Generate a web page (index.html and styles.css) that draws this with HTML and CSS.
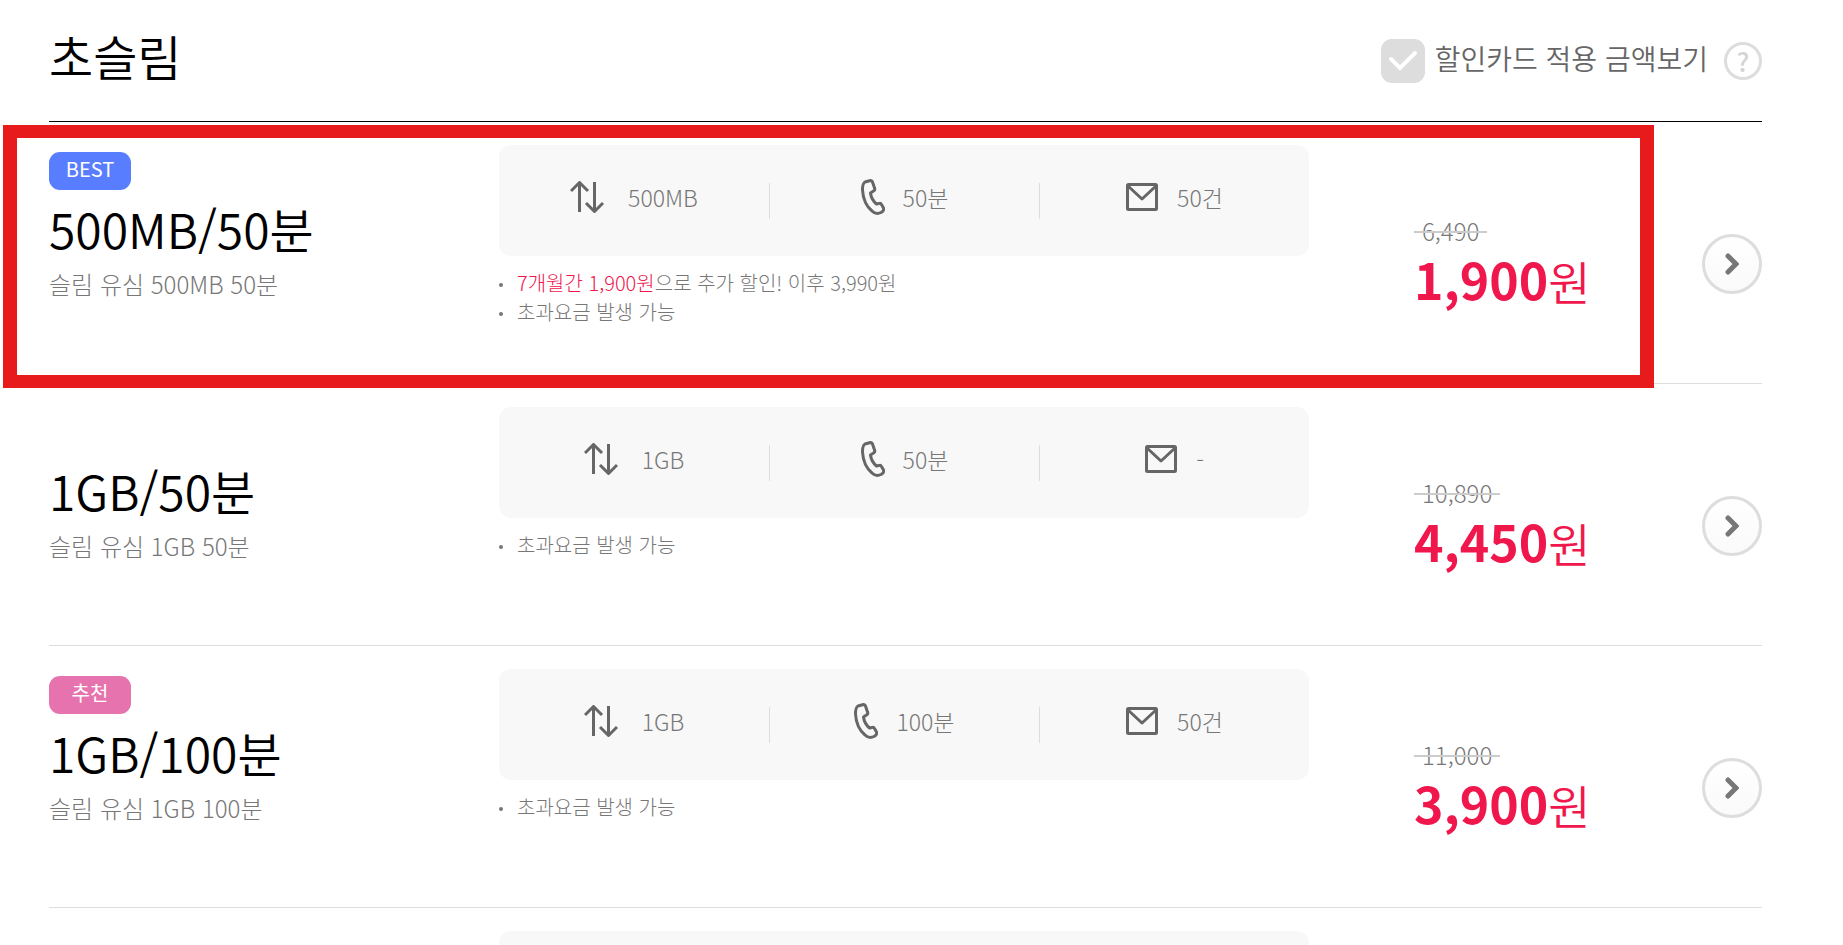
FILE: index.html
```html
<!DOCTYPE html>
<html lang="ko">
<head>
  <meta charset="UTF-8">
  <meta name="viewport" content="width=device-width, initial-scale=1.0">
  <title>초슬림 요금제</title>
  <link rel="stylesheet" href="styles.css">
</head>
<body>
  <!-- shared icons -->
  <svg class="sprite" aria-hidden="true">
    <symbol id="icon-data" viewBox="0 0 34 32">
      <path d="M9.500 31V2M1 10L9.500 1.500L18 10M24.500 1V30M16 22L24.500 30.500L33 22"/>
    </symbol>
    <symbol id="icon-call" viewBox="0 0 24 36">
      <path d="M9.500 1.500L4 3C2 4 1.500 7 1.500 11C2 19 5 27 11 32C13.500 34.500 17 35 20 33.500L21.500 32.500C22.500 31.500 23 30.500 22.500 29L20.500 25.500C20 24.500 19 24 18 24.500L15.500 25C12 22 10 18 9.500 14L12.500 12C14 11 14 10 13.500 9L11.500 3C11 2 10.500 1.500 9.500 1.500Z"/>
    </symbol>
    <symbol id="icon-mail" viewBox="0 0 32 28">
      <rect x="1.500" y="1.500" width="29" height="25" rx="1"/>
      <path d="M2 3L16 16L30 3"/>
    </symbol>
    <symbol id="icon-next" viewBox="0 0 14 22">
      <path d="M3 3L11 11L3 19"/>
    </symbol>
  </svg>

  <main class="page">
    <header class="page-header">
      <h1>초슬림</h1>
      <div class="discount">
        <label class="discount-label">
          <span class="check">
            <input type="checkbox">
            <svg viewBox="0 0 44 44"><path d="M10 20L19 29L34 14"/></svg>
          </span>
          <span class="discount-text">할인카드 적용 금액보기</span>
        </label>
        <button class="help" type="button" aria-label="도움말">?</button>
      </div>
    </header>

    <ul class="plans">
      <li class="plan highlight">
        <div class="plan-info">
          <div class="badge-slot"><span class="badge best">BEST</span></div>
          <h2>500MB/50분</h2>
          <p>슬림 유심 500MB 50분</p>
        </div>
        <div class="plan-detail">
          <div class="stats">
            <div class="stat"><svg class="icon data"><use href="#icon-data"/></svg><span>500MB</span></div>
            <div class="stat"><svg class="icon call"><use href="#icon-call"/></svg><span>50분</span></div>
            <div class="stat"><svg class="icon mail"><use href="#icon-mail"/></svg><span>50건</span></div>
          </div>
          <ul class="notes">
            <li><em>7개월간 1,900원</em>으로 추가 할인! 이후 3,990원</li>
            <li>초과요금 발생 가능</li>
          </ul>
        </div>
        <div class="plan-price">
          <div class="price">
            <del>6,490</del>
            <p><strong>1,900</strong>원</p>
          </div>
          <a class="next" href="#" aria-label="500MB/50분 상세보기"><svg><use href="#icon-next"/></svg></a>
        </div>
      </li>

      <li class="plan">
        <div class="plan-info">
          <div class="badge-slot"></div>
          <h2>1GB/50분</h2>
          <p>슬림 유심 1GB 50분</p>
        </div>
        <div class="plan-detail">
          <div class="stats">
            <div class="stat"><svg class="icon data"><use href="#icon-data"/></svg><span>1GB</span></div>
            <div class="stat"><svg class="icon call"><use href="#icon-call"/></svg><span>50분</span></div>
            <div class="stat"><svg class="icon mail"><use href="#icon-mail"/></svg><span>-</span></div>
          </div>
          <ul class="notes">
            <li>초과요금 발생 가능</li>
          </ul>
        </div>
        <div class="plan-price">
          <div class="price">
            <del>10,890</del>
            <p><strong>4,450</strong>원</p>
          </div>
          <a class="next" href="#" aria-label="1GB/50분 상세보기"><svg><use href="#icon-next"/></svg></a>
        </div>
      </li>

      <li class="plan">
        <div class="plan-info">
          <div class="badge-slot"><span class="badge pick">추천</span></div>
          <h2>1GB/100분</h2>
          <p>슬림 유심 1GB 100분</p>
        </div>
        <div class="plan-detail">
          <div class="stats">
            <div class="stat"><svg class="icon data"><use href="#icon-data"/></svg><span>1GB</span></div>
            <div class="stat"><svg class="icon call"><use href="#icon-call"/></svg><span>100분</span></div>
            <div class="stat"><svg class="icon mail"><use href="#icon-mail"/></svg><span>50건</span></div>
          </div>
          <ul class="notes">
            <li>초과요금 발생 가능</li>
          </ul>
        </div>
        <div class="plan-price">
          <div class="price">
            <del>11,000</del>
            <p><strong>3,900</strong>원</p>
          </div>
          <a class="next" href="#" aria-label="1GB/100분 상세보기"><svg><use href="#icon-next"/></svg></a>
        </div>
      </li>

      <li class="plan">
        <div class="plan-info"></div>
        <div class="plan-detail">
          <div class="stats"></div>
        </div>
      </li>
    </ul>
  </main>
</body>
</html>
```
FILE: styles.css
```css
:root {
  --text: #000;
  --muted: #777;
  --line: #ddd;
  --point: #f0174d;
  --frame: #e71b1b;
}
* {
  box-sizing: border-box;
  margin: 0;
  padding: 0;
}
body {
  height: 100vh;
  overflow: hidden;
  font-family: 'Noto Sans CJK KR', sans-serif;
  font-weight: 300;
  color: var(--text);
  background: #fff;
}
ul {
  list-style: none;
}
.sprite {
  display: none;
}
.page {
  padding: 0 81px 0 49px;
}

/* header */
.page-header {
  display: flex;
  justify-content: space-between;
  align-items: center;
  height: 122px;
  border-bottom: 1px solid #000;
}
.page-header h1 {
  font-size: 48px;
  font-weight: 350;
  line-height: 60px;
  padding-bottom: 12px;
}
.discount {
  display: flex;
  align-items: center;
  gap: 16px;
}
.discount-label {
  display: flex;
  align-items: center;
  gap: 10px;
  font-size: 28px;
  font-weight: 350;
  line-height: 44px;
  color: #666;
}
.discount-text {
  padding-bottom: 6px;
}
.check {
  position: relative;
  width: 44px;
  height: 44px;
}
.check input {
  appearance: none;
  display: block;
  width: 44px;
  height: 44px;
  border-radius: 11px;
  background: var(--line);
}
.check input:checked {
  background: var(--point);
}
.check svg {
  position: absolute;
  inset: 0;
  fill: none;
  stroke: #fff;
  stroke-width: 4;
  stroke-linecap: round;
  pointer-events: none;
}
.help {
  width: 38px;
  height: 38px;
  border: 3px solid var(--line);
  border-radius: 50%;
  background: #fff;
  color: #d4d4d4;
  font-family: inherit;
  font-size: 26px;
  font-weight: 500;
  line-height: 32px;
}

/* plan rows */
.plan {
  position: relative;
  display: grid;
  grid-template-columns: 150fr 270fr 151fr;
  min-height: 262px;
  padding-top: 23px;
  border-bottom: 1px solid var(--line);
}
.highlight::after {
  content: '';
  position: absolute;
  top: 3px;
  right: 108px;
  bottom: -5px;
  left: -46px;
  border: 13px solid var(--frame);
  border-width: 13px 14px;
  pointer-events: none;
}
.badge-slot {
  height: 45px;
  padding-top: 7px;
}
.badge {
  display: block;
  width: 82px;
  height: 38px;
  border-radius: 11px;
  color: #fff;
  font-size: 20px;
  font-weight: 400;
  line-height: 34px;
  text-align: center;
}
.best {
  background: #587dff;
}
.pick {
  background: #e673ad;
}
.plan-info h2 {
  font-size: 48px;
  font-weight: 350;
  line-height: 76px;
}
.plan-info p {
  font-size: 24px;
  line-height: 36px;
  color: var(--muted);
}

/* usage box */
.stats {
  display: grid;
  grid-template-columns: repeat(3, 1fr);
  align-items: center;
  height: 111px;
  border-radius: 12px;
  background: #f8f8f8;
}
.stat {
  display: flex;
  justify-content: center;
  align-items: center;
  height: 36px;
  padding-bottom: 8px;
  font-size: 23px;
  color: var(--muted);
}
.stat + .stat {
  border-left: 1px solid var(--line);
}
.icon {
  flex: none;
  fill: none;
  stroke: #666;
  stroke-width: 3;
  stroke-linejoin: round;
}
.data {
  width: 34px;
  height: 32px;
  margin-right: 24px;
}
.call {
  width: 24px;
  height: 36px;
  margin-right: 18px;
}
.mail {
  width: 32px;
  height: 28px;
  margin-right: 19px;
}
.notes {
  padding-top: 12px;
}
.notes li {
  display: flex;
  align-items: center;
  font-size: 20px;
  line-height: 29px;
  color: var(--muted);
}
.notes li::before {
  content: '';
  width: 4px;
  height: 4px;
  margin: 4px 14px 0 0;
  border-radius: 50%;
  background: var(--muted);
}
.notes em {
  font-style: normal;
  color: var(--point);
}

/* price */
.plan-price {
  display: flex;
  justify-content: space-between;
  align-items: center;
  height: 238px;
  padding-left: 105px;
}
.price {
  padding-bottom: 4px;
}
.price del {
  position: relative;
  display: block;
  width: fit-content;
  padding: 0 8px;
  font-size: 24px;
  line-height: 34px;
  color: var(--muted);
  text-decoration: none;
}
.price del::after {
  content: '';
  position: absolute;
  top: 17px;
  left: 0;
  width: 100%;
  height: 2px;
  background: #ccc;
}
.price p {
  font-size: 46px;
  font-weight: 350;
  line-height: 60px;
  color: var(--point);
}
.price strong {
  font-size: 50px;
  font-weight: 700;
}
.next {
  display: flex;
  justify-content: center;
  align-items: center;
  width: 60px;
  height: 60px;
  border: 3px solid var(--line);
  border-radius: 50%;
  background: linear-gradient(#fff, #fafafa);
}
.next svg {
  width: 14px;
  height: 22px;
  fill: none;
  stroke: #777;
  stroke-width: 5;
  stroke-linecap: round;
}
```
